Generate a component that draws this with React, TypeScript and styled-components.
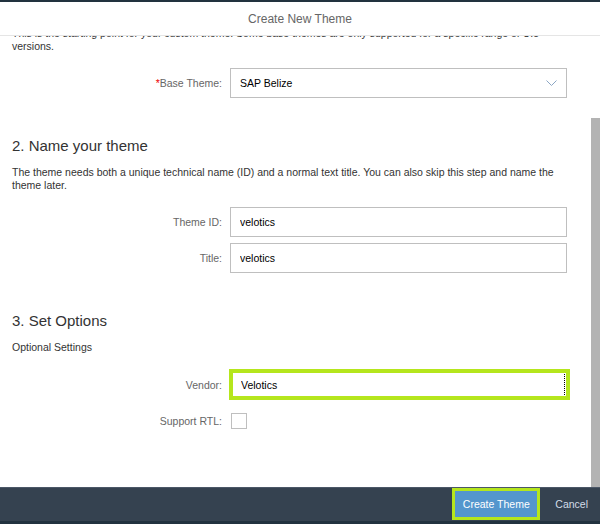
import React, { useLayoutEffect, useRef, useState } from "react";
import styled, { createGlobalStyle } from "styled-components";

const GlobalStyle = createGlobalStyle`
  html, body {
    margin: 0;
    padding: 0;
  }
  body {
    background: #22323f;
    font-family: "Liberation Sans", Arial, sans-serif;
  }
`;

const Dialog = styled.div`
  margin-top: 2px;
  height: 519px;
  display: flex;
  flex-direction: column;
  background: #fff;
`;

const Header = styled.header`
  height: 33px;
  flex-shrink: 0;
  border-bottom: 1px solid #e5e5e5;
  display: flex;
  align-items: center;
  justify-content: center;
  font-size: 12px;
  color: #666;
`;

const BodyWrap = styled.div`
  position: relative;
  flex: 1;
  min-height: 0;
  display: flex;
`;

const Scroller = styled.div`
  flex: 1;
  overflow-y: auto;
  padding: 10px 33px 51px 12px;
  scrollbar-width: none;

  &::-webkit-scrollbar {
    display: none;
  }
`;

const Track = styled.div`
  position: absolute;
  top: 0;
  right: 0;
  bottom: 0;
  width: 9px;
  background: #fff;
`;

const Thumb = styled.div`
  position: absolute;
  left: 0;
  right: 0;
  background: #b3b3b3;
`;

const Intro = styled.p`
  margin: 0 0 38px;
  font-size: 10.5px;
  line-height: 13px;
  color: #333;
`;

const Section = styled.section`
  & + & {
    margin-top: 38px;
  }
`;

const Heading = styled.h2`
  margin: 0 0 10px;
  font-size: 15px;
  line-height: 20px;
  font-weight: normal;
  color: #333;
`;

const Text = styled.p`
  margin: 0 0 15px;
  font-size: 10.5px;
  line-height: 13px;
  color: #333;
`;

const Form = styled.div`
  display: grid;
  grid-template-columns: 210px 1fr;
  grid-auto-rows: minmax(30px, auto);
  column-gap: 8px;
  row-gap: 6px;
  align-items: center;
`;

const Label = styled.label`
  text-align: right;
  font-size: 10.5px;
  color: #666;
`;

const Required = styled.span`
  color: #e00;
`;

const Field = styled.input<{ $highlight?: boolean }>`
  box-sizing: border-box;
  height: ${(p) => (p.$highlight ? "31px" : "30px")};
  margin: ${(p) => (p.$highlight ? "0 -3px 0 -1px" : "0")};
  border: ${(p) => (p.$highlight ? "4px solid #b5e61d" : "1px solid #bfbfbf")};
  padding: 0 ${(p) => (p.$highlight ? "8px" : "9px")};
  font-family: inherit;
  font-size: 10.5px;
  color: #000;
  caret-color: #000;
  background: ${(p) =>
    p.$highlight
      ? "#fff repeating-linear-gradient(to bottom, #000 0 1px, transparent 1px 2px) right 1px top 1px / 1px calc(100% - 2px) no-repeat"
      : "#fff"};
  outline: none;
`;

const Select = styled.div`
  box-sizing: border-box;
  height: 30px;
  border: 1px solid #bfbfbf;
  padding: 0 9px;
  display: flex;
  align-items: center;
  justify-content: space-between;
  font-size: 10.5px;
  color: #000;
  cursor: pointer;
`;

const Check = styled.input`
  appearance: none;
  box-sizing: border-box;
  width: 16px;
  height: 16px;
  margin: 0 0 0 1px;
  border: 1px solid #bfbfbf;
  background: #fff;
`;

const Footer = styled.footer`
  height: 33px;
  flex-shrink: 0;
  border-top: 1px solid #4b5767;
  background: #354250;
  display: flex;
  align-items: flex-start;
  justify-content: flex-end;
  gap: 7px;
  padding-right: 4px;
`;

const PrimaryButton = styled.button`
  box-sizing: border-box;
  width: 88px;
  height: 32px;
  padding: 0;
  border: 3px solid #b5e61d;
  background: #5496cd;
  color: #fff;
  font-family: inherit;
  font-size: 10.5px;
  white-space: nowrap;
  cursor: pointer;
`;

const GhostButton = styled.button`
  height: 32px;
  border: none;
  background: transparent;
  padding: 0 8px;
  color: #d3dde8;
  font-family: inherit;
  font-size: 10.5px;
  cursor: pointer;
`;

const Chevron = () => (
  <svg width="11" height="6" viewBox="0 0 11 6">
    <polyline points="0.5,0.5 5.5,5.5 10.5,0.5" fill="none" stroke="#8ba6c4" strokeWidth="1" />
  </svg>
);

export default function App() {
  const scrollRef = useRef<HTMLDivElement>(null);
  const vendorRef = useRef<HTMLInputElement>(null);
  const [thumb, setThumb] = useState({ top: 0, height: 0 });

  useLayoutEffect(() => {
    const vendor = vendorRef.current;
    if (vendor) {
      vendor.focus({ preventScroll: true });
      vendor.setSelectionRange(vendor.value.length, vendor.value.length);
    }
    const el = scrollRef.current;
    if (!el) return;
    el.scrollTop = el.scrollHeight;
    const ratio = el.clientHeight / el.scrollHeight;
    setThumb({ top: el.scrollTop * ratio, height: el.clientHeight * ratio });
  }, []);

  return (
    <>
      <GlobalStyle />
      <Dialog>
        <Header>Create New Theme</Header>
        <BodyWrap>
          <Scroller ref={scrollRef}>
            <Intro>Create a custom theme in three simple steps.</Intro>

            <Section>
              <Heading>1. Choose a base theme</Heading>
              <Text>
                This is the starting point for your custom theme. Some base themes are only supported for a
                specific range of UI5 versions.
              </Text>
              <Form>
                <Label>
                  <Required>*</Required>Base Theme:
                </Label>
                <Select>
                  <span>SAP Belize</span>
                  <Chevron />
                </Select>
              </Form>
            </Section>

            <Section>
              <Heading>2. Name your theme</Heading>
              <Text>
                The theme needs both a unique technical name (ID) and a normal text title. You can also skip
                this step and name the theme later.
              </Text>
              <Form>
                <Label htmlFor="theme-id">Theme ID:</Label>
                <Field id="theme-id" defaultValue="velotics" />
                <Label htmlFor="theme-title">Title:</Label>
                <Field id="theme-title" defaultValue="velotics" />
              </Form>
            </Section>

            <Section>
              <Heading>3. Set Options</Heading>
              <Text>Optional Settings</Text>
              <Form>
                <Label htmlFor="vendor">Vendor:</Label>
                <Field id="vendor" ref={vendorRef} $highlight defaultValue="Velotics" />
                <Label htmlFor="rtl">Support RTL:</Label>
                <Check id="rtl" type="checkbox" />
              </Form>
            </Section>
          </Scroller>
          <Track>
            <Thumb style={{ top: thumb.top, height: thumb.height }} />
          </Track>
        </BodyWrap>
        <Footer>
          <PrimaryButton>Create Theme</PrimaryButton>
          <GhostButton>Cancel</GhostButton>
        </Footer>
      </Dialog>
    </>
  );
}
